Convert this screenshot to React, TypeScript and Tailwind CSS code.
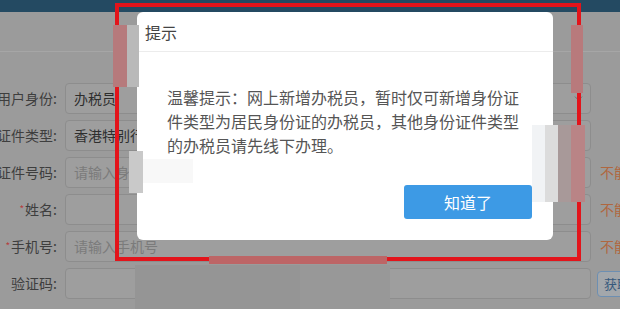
import { ChevronDown } from "lucide-react";

interface Row {
  label: string;
  required?: boolean;
  value?: string;
  placeholder?: string;
  select?: boolean;
  error?: boolean;
  code?: boolean;
}

const rows: Row[] = [
  { label: "用户身份:", value: "办税员", select: true },
  { label: "证件类型:", value: "香港特别行政区永久性居民身份证", select: true },
  { label: "证件号码:", placeholder: "请输入身份证件号码", error: true },
  { label: "姓名:", required: true, error: true },
  { label: "手机号:", required: true, placeholder: "请输入手机号", error: true },
  { label: "验证码:", code: true },
];

// mosaic blur strips (columns of one patch)
const Mosaic = ({ className, cols }: { className: string; cols: string[] }) => (
  <div className={`absolute flex ${className}`}>
    {cols.map((c, i) => (
      <div key={i} className={c} />
    ))}
  </div>
);

const App = () => {
  return (
    <div className="relative w-[620px] h-[309px] overflow-hidden bg-[#9b9b9b] font-['Noto_Sans_CJK_SC','Noto_Sans',sans-serif]">
      {/* page under the mask */}
      <div className="h-[12px] bg-[#244a62]" />
      <div className="h-[40px] border-b border-[#a6a6a6]" />

      <div className="pt-[31px] flex flex-col gap-[6px]">
        {rows.map((row) => (
          <div key={row.label} className="flex items-center h-[31px] text-[14px]">
            <div className="w-[57px] shrink-0 flex justify-end whitespace-nowrap text-[#3e3e3e]">
              {row.required && <span className="text-[#b5403f] text-[10px] mr-[1px] self-start mt-[2px]">*</span>}
              <span>{row.label}</span>
            </div>
            <div className="ml-[8px] w-[526px] shrink-0 h-[31px] flex items-center justify-between pl-[8px] pr-[5px] border border-[#8d8d8d] rounded-[4px] bg-[#9e9e9e] whitespace-nowrap overflow-hidden">
              {row.value ? (
                <span className="text-[#2e2e2e]">{row.value}</span>
              ) : (
                <span className="text-[#7b7b7b]">{row.placeholder}</span>
              )}
              {row.select && <ChevronDown size={13} strokeWidth={1.2} className="text-[#555]" />}
            </div>
            {row.error && <span className="ml-[9px] whitespace-nowrap text-[#b0673f]">不能为空</span>}
            {row.code && (
              <button className="ml-[6px] h-[26px] px-[6px] whitespace-nowrap rounded-[4px] border border-[#6d8fb2] bg-[#a3a7ab] text-[13px] text-[#37597c]">
                获取验证码
              </button>
            )}
          </div>
        ))}
      </div>

      {/* dialog */}
      <div className="absolute left-[137px] top-[12px] w-[416px] h-[228px] bg-white rounded-[6px] flex flex-col">
        <div className="h-[40px] shrink-0 border-b border-[#ececec] px-[8px] flex items-center text-[16px] text-[#444]">
          提示
        </div>
        <p className="pt-[33px] px-[30px] text-[16px] leading-[24px] text-[#555]">
          温馨提示：网上新增办税员，暂时仅可新增身份证件类型为居民身份证的办税员，其他身份证件类型的办税员请先线下办理。
        </p>
        <div className="mt-[28px] flex justify-end pr-[21px]">
          <button className="w-[128px] h-[34px] rounded-[3px] bg-[#3d9ae5] text-white text-[16px]">知道了</button>
        </div>
      </div>

      {/* red annotation frame */}
      <div className="absolute left-[115px] top-[3px] w-[466px] h-[258px] border-[4px] border-[#e3141b]" />

      <Mosaic className="left-[113px] top-[25px] h-[62px]" cols={["w-[14px] bg-[#b67a7c]", "w-[12px] bg-[#b9b9b9]"]} />
      <Mosaic className="left-[129px] top-[151px] h-[42px]" cols={["w-[14px] bg-[#c9c9c9]", "w-[50px] h-[24px] mt-[8px] bg-[#f8f8f8]"]} />
      <Mosaic className="left-[571px] top-[25px] h-[68px]" cols={["w-[12px] bg-[#b87a7c]"]} />
      <Mosaic
        className="left-[532px] top-[125px] h-[77px]"
        cols={["w-[13px] bg-[#f1f3f5]", "w-[13px] bg-[#dcdcdc]", "w-[13px] bg-[#a89999]", "w-[14px] bg-[#b98486]"]}
      />
      <Mosaic className="left-[209px] top-[256px] h-[8px]" cols={["w-[178px] bg-[#bd6566]"]} />
      <Mosaic className="left-[135px] top-[265px] h-[44px]" cols={["w-[165px] bg-[#959595]", "w-[90px] bg-[#989898]"]} />
    </div>
  );
};

export default App;
